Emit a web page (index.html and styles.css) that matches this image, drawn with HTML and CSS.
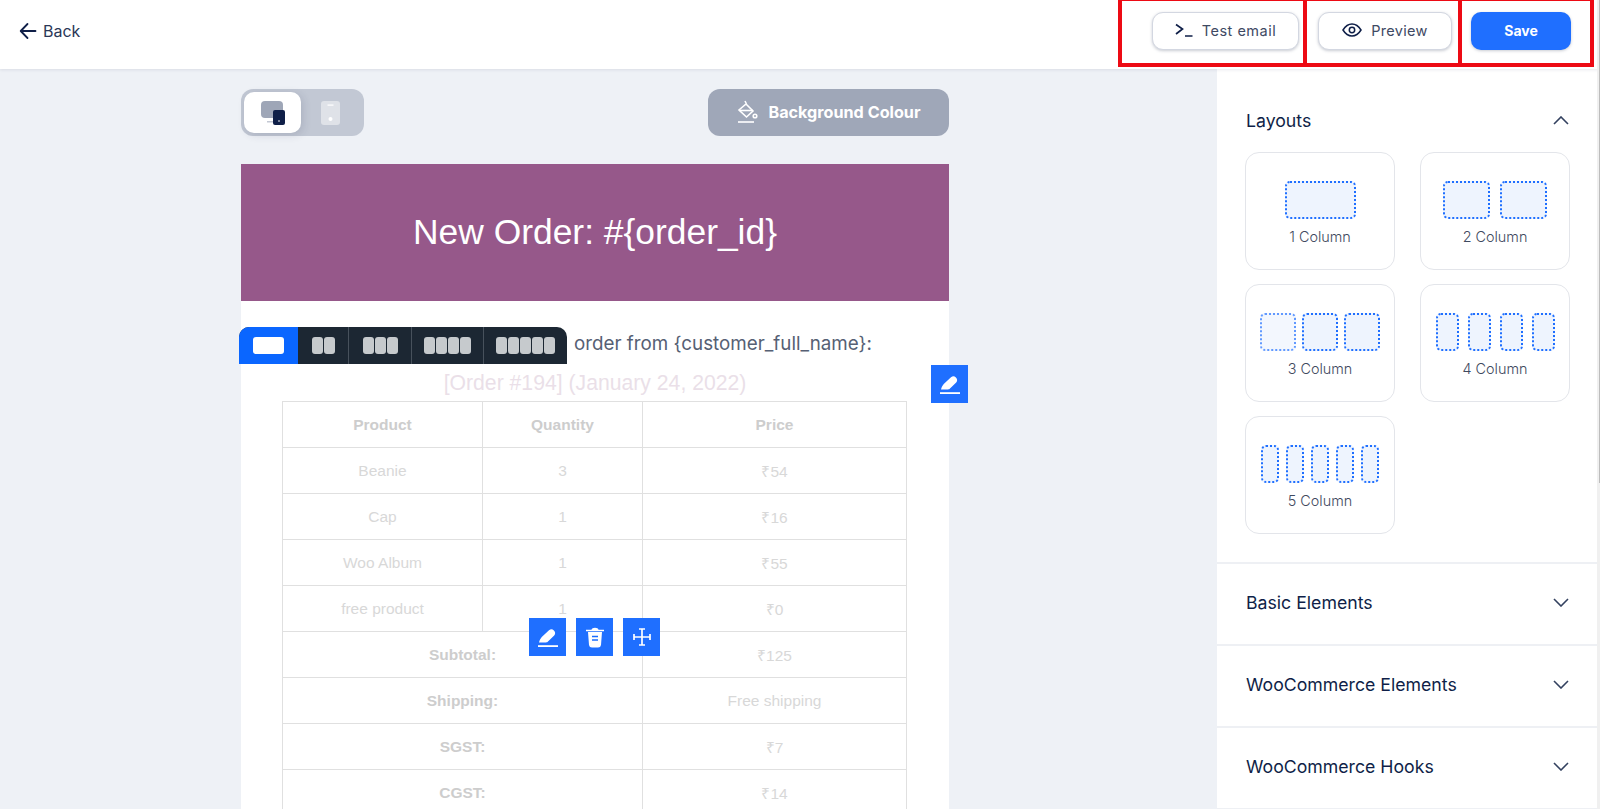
FILE: index.html
```html
<!DOCTYPE html>
<html lang="en">
<head>
    <meta charset="UTF-8">
    <title>Email Builder</title>
    <link rel="stylesheet" href="styles.css">
</head>
<body>
    <header class="topbar">
        <a class="back">
            <svg width="18" height="18" viewBox="0 0 18 18" fill="none" stroke="#0f1f48" stroke-width="1.8" stroke-linecap="round" stroke-linejoin="round"><path d="M16.5 9H2M8.5 2 1.7 9l6.8 7"/></svg>
            <span>Back</span>
        </a>
        <div class="actions">
            <div class="mark mark-test">
                <button class="btn btn-test">
                    <svg width="18" height="14" viewBox="0 0 18 14" fill="none" stroke="#0f1f48" stroke-width="1.7"><path d="M1 1.5 7.5 6 1 11M10 13h7.5"/></svg>
                    Test email
                </button>
            </div>
            <div class="mark mark-preview">
                <button class="btn btn-preview">
                    <svg width="20" height="14" viewBox="0 0 20 14" fill="none" stroke="#0f1f48" stroke-width="1.5"><path d="M1 7c2.4-3.9 5.4-6 9-6s6.600 2.100 9 6c-2.400 3.900-5.400 6-9 6s-6.600-2.100-9-6Z"/><circle cx="10" cy="7" r="2.700"/></svg>
                    Preview
                </button>
            </div>
            <div class="mark mark-save">
                <button class="btn-save">Save</button>
            </div>
        </div>
    </header>

    <div class="main">
        <div class="canvas">
            <div class="canvas-inner">
                <div class="canvas-top">
                    <div class="device-switch">
                        <div class="device device-on">
                            <svg width="26" height="26" viewBox="0 0 26 26"><rect x="1" y="1" width="22" height="17" rx="4" fill="#9ea6b7"/><rect x="7" y="21" width="8" height="1.500" fill="#c3c8d3"/><rect x="13" y="10" width="12" height="15" rx="2" fill="#0f1f48"/><circle cx="19" cy="21" r="1" fill="#9ea6b7"/></svg>
                        </div>
                        <div class="device">
                            <svg width="19" height="24" viewBox="0 0 19 24"><rect width="19" height="24" rx="3" fill="#dfe2e8"/><rect x="6.500" y="3.500" width="6" height="1.200" fill="#fff"/><circle cx="9.500" cy="18" r="2" fill="#fff"/></svg>
                        </div>
                    </div>
                    <button class="bg-btn">
                        <svg width="22" height="23" viewBox="0 0 22 23" fill="none" stroke="#fff" stroke-width="1.600"><path d="M9 1l1.500 3M10 4l7 7-6.500 6-7.500-7z"/><path d="M3.500 10.500h13.500"/><circle cx="19" cy="16" r="1.800"/><path d="M2 22h16"/></svg>
                        Background Colour
                    </button>
                </div>

                <div class="email">
                    <div class="email-head">New Order: #{order_id}</div>
                    <p class="email-intro">order from {customer_full_name}:</p>
                    <h2 class="order-title">[Order #194] (January 24, 2022)</h2>
                    <table class="order-table">
                        <colgroup><col class="col-a"><col class="col-b"><col class="col-c"></colgroup>
                        <tr><th>Product</th><th>Quantity</th><th>Price</th></tr>
                        <tr><td>Beanie</td><td>3</td><td>₹54</td></tr>
                        <tr><td>Cap</td><td>1</td><td>₹16</td></tr>
                        <tr><td>Woo Album</td><td>1</td><td>₹55</td></tr>
                        <tr><td>free product</td><td>1</td><td>₹0</td></tr>
                        <tr><th colspan="2">Subtotal:</th><td>₹125</td></tr>
                        <tr><th colspan="2">Shipping:</th><td>Free shipping</td></tr>
                        <tr><th colspan="2">SGST:</th><td>₹7</td></tr>
                        <tr><th colspan="2">CGST:</th><td>₹14</td></tr>
                    </table>

                    <div class="col-picker">
                        <div class="col-opt col-opt-on"><i class="bar-one"></i></div>
                        <div class="col-opt col-two"><i></i><i></i></div>
                        <div class="col-opt col-three"><i></i><i></i><i></i></div>
                        <div class="col-opt col-four"><i></i><i></i><i></i><i></i></div>
                        <div class="col-opt col-five"><i></i><i></i><i></i><i></i><i></i></div>
                    </div>

                    <div class="tool tool-edit">
                        <svg width="22" height="22" viewBox="0 0 22 22" fill="#fff"><path d="M2 16.500c.6-2.500 1.600-4.300 3-5.700l7-6.500a3.700 3.700 0 0 1 5.200 5.200l-7 6.700c-.5.300-8.200.3-8.200.3z"/><rect x="1" y="19.200" width="20" height="1.800"/></svg>
                    </div>
                    <div class="tool-group">
                        <div class="tool">
                            <svg width="22" height="22" viewBox="0 0 22 22" fill="#fff"><path d="M2 16.500c.6-2.500 1.600-4.300 3-5.700l7-6.500a3.700 3.700 0 0 1 5.200 5.200l-7 6.700c-.5.300-8.200.3-8.200.3z"/><rect x="1" y="19.200" width="20" height="1.800"/></svg>
                        </div>
                        <div class="tool">
                            <svg width="20" height="22" viewBox="0 0 20 22"><path d="M1 4.500h18" stroke="#fff" stroke-width="1.500"/><path d="M6.500 4c0-3 7-3 7 0z" fill="#fff"/><path d="M3 6h14l-1 13a3 3 0 0 1-3 2.500H7A3 3 0 0 1 4 19z" fill="#fff"/><path d="M7 10.500h6M7 14h6" stroke="#1a6dff" stroke-width="1.500"/></svg>
                        </div>
                        <div class="tool">
                            <svg width="20" height="20" viewBox="0 0 20 20" fill="none" stroke="#fff" stroke-width="1.700"><path d="M10 2v16M2 10h16M7 2h6M7 18h6M2 7v6M18 7v6"/></svg>
                        </div>
                    </div>
                </div>
            </div>
        </div>

        <aside class="sidebar">
            <section class="panel panel-open">
                <div class="panel-head">
                    <span>Layouts</span>
                    <svg class="chev" width="16" height="9" viewBox="0 0 16 9" fill="none" stroke="#33415f" stroke-width="1.600"><path d="M1 8l7-7 7 7"/></svg>
                </div>
                <div class="layout-grid">
                    <div class="layout-card">
                        <div class="cols"><i class="w70"></i></div>
                        <span>1 Column</span>
                    </div>
                    <div class="layout-card">
                        <div class="cols cols-2"><i class="w47"></i><i class="w47"></i></div>
                        <span>2 Column</span>
                    </div>
                    <div class="layout-card">
                        <div class="cols cols-3"><i class="w36 faded"></i><i class="w36"></i><i class="w36"></i></div>
                        <span>3 Column</span>
                    </div>
                    <div class="layout-card">
                        <div class="cols cols-4"><i class="w23"></i><i class="w23"></i><i class="w23"></i><i class="w23"></i></div>
                        <span>4 Column</span>
                    </div>
                    <div class="layout-card">
                        <div class="cols cols-5"><i class="w18"></i><i class="w18"></i><i class="w18"></i><i class="w18"></i><i class="w18"></i></div>
                        <span>5 Column</span>
                    </div>
                </div>
            </section>
            <section class="panel">
                <div class="panel-head panel-closed">
                    <span>Basic Elements</span>
                    <svg class="chev" width="16" height="9" viewBox="0 0 16 9" fill="none" stroke="#33415f" stroke-width="1.600"><path d="M1 1l7 7 7-7"/></svg>
                </div>
            </section>
            <section class="panel">
                <div class="panel-head panel-closed">
                    <span>WooCommerce Elements</span>
                    <svg class="chev" width="16" height="9" viewBox="0 0 16 9" fill="none" stroke="#33415f" stroke-width="1.600"><path d="M1 1l7 7 7-7"/></svg>
                </div>
            </section>
            <section class="panel">
                <div class="panel-head panel-closed">
                    <span>WooCommerce Hooks</span>
                    <svg class="chev" width="16" height="9" viewBox="0 0 16 9" fill="none" stroke="#33415f" stroke-width="1.600"><path d="M1 1l7 7 7-7"/></svg>
                </div>
            </section>
        </aside>
    </div>

    <div class="scrollbar"><div class="scroll-thumb"></div></div>
</body>
</html>
```

FILE: styles.css
```css
*{
    box-sizing: border-box;
}
html,body{
    margin: 0;
    padding: 0;
    height: 809px;
    overflow: hidden;
}
body{
    background-color: #EEF1F6;
    font-family: 'Inter', 'Noto Sans', sans-serif;
    color: #0F1F48;
    position: relative;
}
button{
    font-family: inherit;
}

/* top bar */
.topbar{
    height: 69px;
    background-color: #fff;
    display: flex;
    justify-content: space-between;
    align-items: flex-start;
    padding: 0 6px 0 19px;
    box-shadow: 0 1px 3px rgba(40,50,80,.1);
    position: relative;
    z-index: 2;
}
.back{
    display: flex;
    align-items: center;
    gap: 6px;
    height: 62px;
    font-size: 16px;
    color: #2b3757;
}
.actions{
    display: flex;
}
.mark{
    height: 67px;
    border: 4px solid #ED0A14;
    border-top-width: 1px;
    display: flex;
    justify-content: flex-end;
    padding-top: 11px;
}
.mark-test{
    width: 189px;
    padding-right: 4px;
    margin-right: -4px;
}
.mark-preview{
    width: 159px;
    padding-right: 6px;
    margin-right: -4px;
}
.mark-save{
    width: 136px;
    padding-right: 19px;
}
.btn{
    height: 38px;
    background-color: #fff;
    border: 1px solid #D3D7E1;
    border-radius: 11px;
    box-shadow: 0 1px 3px rgba(40,50,80,.25);
    font-size: 14.500px;
    color: #3e4963;
    display: flex;
    align-items: center;
    justify-content: center;
    gap: 9px;
    letter-spacing: .3px;
    padding: 0 0 2px;
}
.btn-test{
    width: 147px;
    letter-spacing: .5px;
}
.btn-preview{
    width: 134px;
}
.btn-save{
    width: 100px;
    height: 38px;
    background-color: #1F6FFF;
    border: none;
    border-radius: 10px;
    color: #fff;
    font-size: 14px;
    font-weight: 700;
    box-shadow: 0 1px 3px rgba(40,50,80,.25);
    padding: 0 0 1px;
}

/* layout */
.main{
    display: flex;
    height: 740px;
}
.canvas{
    width: 1217px;
    overflow: hidden;
    padding: 20px 0 0 241px;
}
.canvas-inner{
    width: 708px;
}
.canvas-top{
    display: flex;
    justify-content: space-between;
    height: 47px;
    margin-bottom: 28px;
}
.device-switch{
    width: 123px;
    background-color: #C2C8D4;
    border-radius: 12px;
    padding: 3px;
    display: flex;
}
.device{
    width: 57px;
    height: 41px;
    display: flex;
    align-items: center;
    justify-content: center;
}
.device-on{
    background-color: #fff;
    border-radius: 10px;
    box-shadow: 2px 2px 8px rgba(40,50,80,.15);
    margin-right: 1px;
}
.bg-btn{
    width: 241px;
    background-color: #9FA7B8;
    border: none;
    border-radius: 12px;
    color: #fff;
    font-size: 16.200px;
    font-weight: 700;
    display: flex;
    align-items: center;
    justify-content: center;
    gap: 10px;
    padding: 0 0 2px;
}

/* email preview */
.email{
    background-color: #fff;
    position: relative;
    height: 660px;
}
.email-head{
    height: 137px;
    background-color: #96588A;
    color: #fff;
    font-family: 'Liberation Sans', Arial, sans-serif;
    font-size: 35.400px;
    display: flex;
    align-items: center;
    justify-content: center;
}
.email-intro{
    margin: 0;
    padding: 29px 0 0 333px;
    font-size: 18.800px;
    line-height: 28px;
    color: #566074;
    white-space: nowrap;
}
.order-title{
    margin: 12px 0 5px;
    font-family: 'Liberation Sans', Arial, sans-serif;
    font-size: 21.200px;
    font-weight: 400;
    line-height: 26px;
    color: #EADFE8;
    text-align: center;
}
.order-table{
    width: 624px;
    margin-left: 41px;
    border-collapse: collapse;
    table-layout: fixed;
    font-family: 'Liberation Sans', Arial, sans-serif;
    font-size: 15.500px;
}
.col-a{
    width: 200px;
}
.col-b{
    width: 160px;
}
.col-c{
    width: 264px;
}
.order-table th,.order-table td{
    height: 46px;
    border: 1px solid #E0E0E0;
    text-align: center;
    padding: 0;
}
.order-table th{
    color: #CDCDCD;
}
.order-table td{
    color: #D8D8D8;
}

/* floating tools */
.col-picker{
    position: absolute;
    left: -2px;
    top: 163px;
    height: 37px;
    display: flex;
    background-color: #1C2733;
    border-radius: 10px 10px 0 0;
    overflow: hidden;
}
.col-opt{
    display: flex;
    align-items: center;
    justify-content: center;
    gap: 1px;
    border-right: 1px solid #47515c;
}
.col-opt:last-child{
    border-right: none;
}
.col-opt i{
    width: 11px;
    height: 17px;
    background-color: #C6CACD;
    border-radius: 3px;
}
.col-opt-on{
    width: 59px;
    background-color: #0A66FF;
    border-right: none;
}
.col-opt-on .bar-one{
    width: 31px;
    background-color: #fff;
}
.col-two{
    width: 51px;
}
.col-three{
    width: 63px;
}
.col-four{
    width: 72px;
}
.col-five{
    width: 83px;
}
.tool{
    width: 37px;
    height: 38px;
    background-color: #1F6FFF;
    display: flex;
    align-items: center;
    justify-content: center;
}
.tool-edit{
    position: absolute;
    left: 690px;
    top: 201px;
}
.tool-group{
    position: absolute;
    left: 288px;
    top: 454px;
    display: flex;
    gap: 10px;
}

/* right sidebar */
.sidebar{
    width: 383px;
    background-color: #fff;
}
.panel{
    border-bottom: 2px solid #EEF0F4;
}
.panel-open{
    height: 495px;
    padding: 30px 31px 0 29px;
}
.panel-head{
    display: flex;
    justify-content: space-between;
    align-items: center;
    font-size: 17.700px;
    font-weight: 400;
}
.panel-open .panel-head{
    height: 43px;
    margin-bottom: 10px;
}
.panel-closed{
    height: 80px;
    padding: 0 31px 4px 29px;
}
.layout-grid{
    display: grid;
    grid-template-columns: 150px 150px;
    column-gap: 25px;
    row-gap: 14px;
    margin-left: -1px;
}
.layout-card{
    height: 118px;
    border: 1px solid #E3E5EA;
    border-radius: 14px;
    display: flex;
    flex-direction: column;
    align-items: center;
    padding-top: 28px;
    font-size: 14.400px;
    font-weight: 300;
    color: #3F4A60;
}
.layout-card span{
    margin-top: 9px;
}
.cols{
    display: flex;
    justify-content: center;
}
.cols i{
    height: 38px;
    border: 2px dotted #1F6FFF;
    border-radius: 5px;
    background-color: #EEF4FE;
}
.cols-2{
    gap: 10px;
}
.cols-3{
    gap: 6px;
}
.cols-4{
    gap: 9px;
}
.cols-5{
    gap: 7px;
}
.w70{
    width: 71px;
}
.w47{
    width: 47px;
}
.w36{
    width: 36px;
}
.w23{
    width: 23px;
}
.w18{
    width: 18px;
}
.faded{
    opacity: .7;
}

/* page scrollbar sliver on the right edge */
.scrollbar{
    position: absolute;
    top: 0;
    right: 0;
    width: 3px;
    height: 809px;
    background-color: #F0F0F0;
    z-index: 3;
}
.scroll-thumb{
    width: 1px;
    height: 483px;
    margin-left: 2px;
    background-color: #BDBDBD;
}
```
